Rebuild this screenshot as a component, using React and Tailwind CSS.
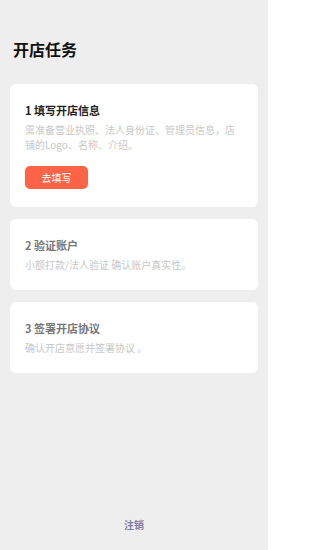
const font = { fontFamily: '"Noto Sans CJK SC", "Noto Sans", sans-serif' };

const Task = ({ title, desc, active, children }) => (
  <div className="bg-white rounded-md mx-[10px] px-[15px] py-[18px]">
    <div className={`text-[11px] leading-[16px] font-bold ${active ? 'text-[#222]' : 'text-[#777]'}`}>{title}</div>
    <div className="mt-[4px] text-[10px] leading-[15px] text-[#c8c8c8]">{desc}</div>
    {children}
  </div>
);

export default function App() {
  return (
    <div className="w-[268px] h-[550px] bg-[#eeeeee] flex flex-col" style={font}>
      <div className="pl-[13px] pt-[38px] text-[16px] leading-[22px] font-bold text-[#111]">开店任务</div>
      <div className="mt-[24px] flex flex-col gap-[12px]">
        <Task active title="1 填写开店信息" desc="需准备营业执照、法人身份证、管理员信息，店铺的Logo、名称、介绍。">
          <button className="mt-[14px] w-[63px] h-[23px] rounded-[5px] bg-[#fd6346] text-white text-[10px]">去填写</button>
        </Task>
        <Task title="2 验证账户" desc="小额打款/法人验证 确认账户真实性。" />
        <Task title="3 签署开店协议" desc="确认开店意愿并签署协议 。" />
      </div>
      <div className="mt-auto mb-[18px] text-center text-[10px] font-bold text-[#7c7ca6]">注销</div>
    </div>
  );
}
